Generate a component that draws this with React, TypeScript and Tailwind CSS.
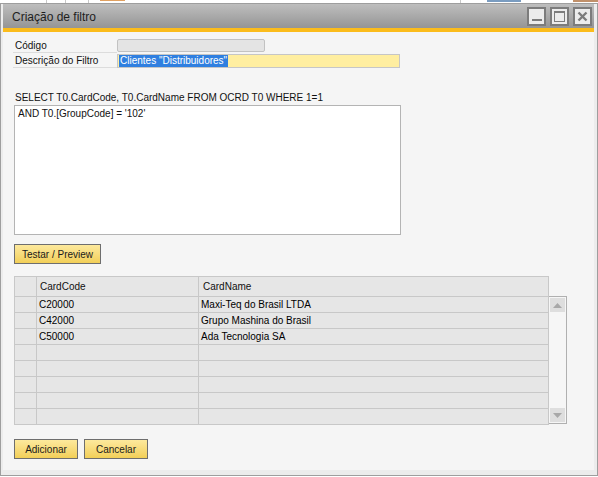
import React from "react";

const font = { fontFamily: '"Liberation Sans", Arial, sans-serif' };

function YellowButton({ label, w }: { label: string; w: string }) {
  return (
    <div
      className={`${w} h-[20px] border border-[#6e6e6e] bg-gradient-to-b from-[#fde99c] to-[#f2cf57] flex items-center justify-center text-[10px] text-[#1a1a1a]`}
    >
      {label}
    </div>
  );
}

const rows: [string, string][] = [
  ["C20000", "Maxi-Teq do Brasil LTDA"],
  ["C42000", "Grupo Mashina do Brasil"],
  ["C50000", "Ada Tecnologia SA"],
  ["", ""],
  ["", ""],
  ["", ""],
  ["", ""],
  ["", ""],
];

export default function App() {
  return (
    <div className="w-[598px] h-[477px] bg-white overflow-hidden flex flex-col" style={font}>
      {/* background strip */}
      <div className="h-[3px] flex relative bg-white">
        <div className="absolute left-[46px] top-0 w-[1px] h-[3px] bg-[#c8c8c8]" />
        <div className="absolute left-[65px] top-0 w-[1px] h-[3px] bg-[#c8c8c8]" />
        <div className="absolute left-[88px] top-0 w-[1px] h-[3px] bg-[#c8c8c8]" />
        <div className="absolute left-[100px] top-0 w-[25px] h-[1px] bg-[#e0a060]" />
        <div className="absolute left-[460px] top-0 w-[1px] h-[3px] bg-[#c8c8c8]" />
        <div className="absolute left-[487px] top-0 w-[34px] h-[2px] bg-[#7a9cc0]" />
        <div className="absolute left-[573px] top-0 w-[25px] h-[2px] bg-[#c0906a]" />
      </div>
      {/* window */}
      <div className="w-[598px] h-[473px] border border-[#9e9e9e] bg-[#ececec] pl-[2px] pr-[3px] pb-[5px] flex flex-col">
        {/* title bar */}
        <div className="h-[24px] bg-gradient-to-b from-[#bebebe] to-[#959595] flex items-center pl-[9px] pr-[2px] shrink-0">
          <div className="text-[12px] text-[#1e1e1e] flex-1 pt-[1px]">Criação de filtro</div>
          <div className="flex gap-[4px]">
            <div className="w-[19px] h-[19px] bg-[#ececec] border-2 border-[#7c7c7c] flex items-end justify-center pb-[3px]">
              <div className="w-[10px] h-[2px] bg-[#7c7c7c]" />
            </div>
            <div className="w-[19px] h-[19px] bg-[#ececec] border-2 border-[#7c7c7c] flex items-center justify-center">
              <div className="w-[11px] h-[11px] border border-[#7c7c7c] border-t-2" />
            </div>
            <div className="w-[19px] h-[19px] bg-[#ececec] border-2 border-[#7c7c7c] flex items-center justify-center">
              <svg width="11" height="11" viewBox="0 0 11 11">
                <path d="M1.5 1.5 L9.5 9.5 M9.5 1.5 L1.5 9.5" stroke="#7c7c7c" strokeWidth="2.4" />
              </svg>
            </div>
          </div>
        </div>
        <div className="h-[4px] bg-[#fbbc1c] shrink-0" />
        {/* body */}
        <div className="flex-1 bg-[#f5f5f5] pl-[10px] flex flex-col text-[10px] text-[#111]">
          {/* form rows */}
          <div className="mt-[7px] flex flex-col">
            <div className="flex h-[14px]">
              <div className="w-[104px] border-b border-[#dcdcdc] pl-[2px] flex items-center">Código</div>
              <div className="w-[148px] h-[13px] bg-[#e4e4e4] border border-[#c2c2c2] rounded-[2px]" />
            </div>
            <div className="flex h-[14px] mt-[1px]">
              <div className="w-[104px] border-b border-[#dcdcdc] pl-[2px] flex items-center">Descrição do Filtro</div>
              <div className="w-[283px] h-[14px] bg-[#ffeea0] border border-[#c6c6c6] flex items-center pl-[1px]">
                <span className="bg-[#2f7fe0] text-white leading-[12px] px-[1px]">Clientes "Distribuidores"</span>
              </div>
            </div>
          </div>
          {/* SQL */}
          <div className="mt-[24px] pl-[2px] leading-[12px]">SELECT T0.CardCode, T0.CardName FROM OCRD T0 WHERE 1=1</div>
          <div className="mt-[1px] ml-[1px] w-[387px] h-[130px] bg-white border border-[#b4b4b4] pl-[3px] pt-[1px] leading-[13px]">
            AND T0.[GroupCode] = '102'
          </div>
          <div className="mt-[9px] ml-[1px]">
            <YellowButton label="Testar / Preview" w="w-[87px]" />
          </div>
          {/* grid */}
          <div className="mt-[12px] ml-[1px] flex">
            <div className="flex flex-col border-l border-t border-[#c8c8c8] bg-[#e6e6e6]">
              <div className="flex h-[20px]">
                <div className="w-[22px] border-r border-b border-[#c8c8c8]" />
                <div className="w-[162px] border-r border-b border-[#c8c8c8] pl-[3px] flex items-center">CardCode</div>
                <div className="w-[350px] border-r border-b border-[#c8c8c8] pl-[4px] flex items-center">CardName</div>
              </div>
              {rows.map((r, i) => (
                <div key={i} className="flex h-[16px]">
                  <div className="w-[22px] border-r border-b border-[#c8c8c8]" />
                  <div className="w-[162px] border-r border-b border-[#c8c8c8] pl-[2px] flex items-center text-black">{r[0]}</div>
                  <div className="w-[350px] border-r border-b border-[#c8c8c8] pl-[2px] flex items-center text-black">{r[1]}</div>
                </div>
              ))}
            </div>
            <div className="mt-[20px] w-[18px] h-[128px] border border-l-0 border-[#b0b0b0] bg-[#f6f6f6] flex flex-col justify-between py-[1px] pl-[1px]">
              <div className="w-[15px] h-[14px] bg-[#dedede] flex items-center justify-center">
                <svg width="9" height="5" viewBox="0 0 9 5"><path d="M4.5 0 L9 5 L0 5 Z" fill="#a8a8a8" /></svg>
              </div>
              <div className="w-[15px] h-[14px] bg-[#dedede] flex items-center justify-center">
                <svg width="9" height="5" viewBox="0 0 9 5"><path d="M0 0 L9 0 L4.5 5 Z" fill="#a8a8a8" /></svg>
              </div>
            </div>
          </div>
          {/* bottom buttons */}
          <div className="mt-[14px] ml-[1px] flex gap-[6px]">
            <YellowButton label="Adicionar" w="w-[64px]" />
            <YellowButton label="Cancelar" w="w-[64px]" />
          </div>
        </div>
      </div>
    </div>
  );
}
